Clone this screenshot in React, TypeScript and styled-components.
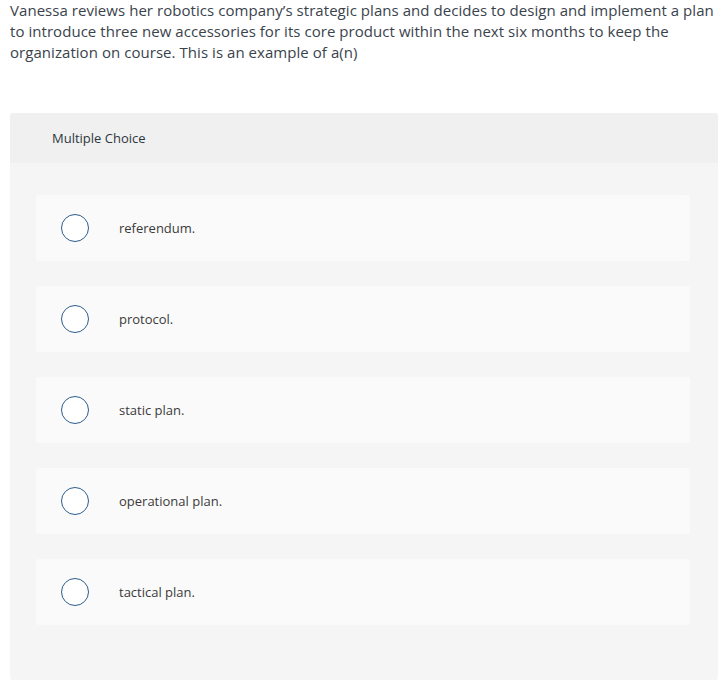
import { FC } from 'react';
import { createGlobalStyle, styled } from 'styled-components';

const GlobalStyle = createGlobalStyle`
  body {
    margin: 0;
    background: #fff;
    font-family: 'Open Sans', 'Liberation Sans', sans-serif;
    color: #333;
  }
`;

const options = ['referendum.', 'protocol.', 'static plan.', 'operational plan.', 'tactical plan.'];

const Option: FC<{ label: string }> = ({ label }) => (
  <OptionCard>
    <Radio />
    <OptionLabel>{label}</OptionLabel>
  </OptionCard>
);

export default function App() {
  return (
    <>
      <GlobalStyle />
      <Page>
        <Question>
          Vanessa reviews her robotics company’s strategic plans and decides to design and implement a plan
          to introduce three new accessories for its core product within the next six months to keep the
          organization on course. This is an example of a(n)
        </Question>
        <Panel>
          <PanelHeader>Multiple Choice</PanelHeader>
          <OptionList>
            {options.map((o) => (
              <Option key={o} label={o} />
            ))}
          </OptionList>
        </Panel>
      </Page>
    </>
  );
}

const Page = styled.div`
  padding: 0 9px 0 10px;
  width: 708px;
`;

const Question = styled.p`
  margin: 0;
  font-size: 15px;
  line-height: 21px;
  letter-spacing: 0.05px;
  color: #3a434c;
`;

const Panel = styled.div`
  margin-top: 50px;
  background: #f5f5f5;
  border-radius: 3px;
  height: 567px;
  overflow: hidden;
`;

const PanelHeader = styled.div`
  height: 50px;
  background: #f0f0f0;
  display: flex;
  align-items: center;
  padding-left: 42px;
  font-size: 13px;
  color: #2d3741;
`;

const OptionList = styled.div`
  display: flex;
  flex-direction: column;
  gap: 25px;
  padding: 32px 28px 0 26px;
`;

const OptionCard = styled.div`
  height: 66px;
  background: #fafafa;
  border-radius: 3px;
  display: flex;
  align-items: center;
  padding-left: 25px;
`;

const Radio = styled.span`
  box-sizing: border-box;
  width: 28px;
  height: 28px;
  border-radius: 50%;
  border: 1.5px solid #2c5d8c;
  background: #fff;
  flex-shrink: 0;
`;

const OptionLabel = styled.span`
  margin-left: 30px;
  font-size: 13px;
  color: #3a3a3a;
`;
